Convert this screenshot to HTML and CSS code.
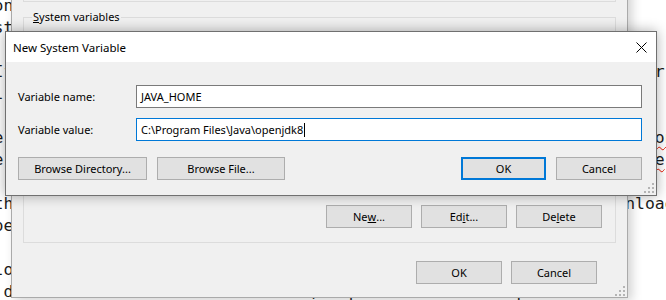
FILE: index.html
```html
<!DOCTYPE html>
<html lang="en">
<head>
<meta charset="utf-8">
<title>New System Variable</title>
<link rel="stylesheet" href="styles.css">
</head>
<body>
<pre class="editor">on your computer. Before you begin, make sure that you have
st Java installation, open a Command Prompt and type:
    java -version
If Java is not installed on your machine, download the JDK installer.
l and look for a line such as java version "1.8.0_292".
' in the output. If nothing is printed, Java is not installed yet.
e the installer is finished, open System Properties and click <span class="sp">Environment</span> Variables.
e click New... under System variables and type JAVA_HOME as the <span class="sp">name</span>.
  and set the value to the path of the JDK folder, for example
the path to the JDK folder (e.g. C:\Program Files\Java). Now download it.
pe of the installer, then restart any open command windows.

lo check the result, run echo %JAVA_HOME% in a new window.
'd like to switch versions later, repeat the same steps.</pre>

<div class="win env ui">
  <div class="user-box"></div>
  <fieldset class="group">
    <legend><u>S</u>ystem variables</legend>
    <div class="list"></div>
    <div class="row-btns">
      <div class="btn">Ne<u>w</u>...</div>
      <div class="btn">Ed<u>i</u>t...</div>
      <div class="btn">De<u>l</u>ete</div>
    </div>
  </fieldset>
  <div class="env-foot">
    <div class="btn">OK</div>
    <div class="btn">Cancel</div>
  </div>
  <svg class="grip grip-env" width="10" height="10" viewBox="0 0 10 10"><rect x="8" y="0" width="2" height="2"/><rect x="4" y="4" width="2" height="2"/><rect x="8" y="4" width="2" height="2"/><rect x="0" y="8" width="2" height="2"/><rect x="4" y="8" width="2" height="2"/><rect x="8" y="8" width="2" height="2"/></svg>
</div>

<div class="win dlg ui">
  <div class="titlebar">
    <span class="title">New System Variable</span>
    <svg class="close" width="11" height="11" viewBox="0 0 11 11"><path d="M0.5 0.5 L10.5 10.5 M10.5 0.5 L0.5 10.5" stroke="#000" stroke-width="1" fill="none"/></svg>
  </div>
  <div class="dlg-body">
    <div class="form">
      <span class="label">Variable name:</span>
      <div class="field">JAVA_HOME</div>
      <span class="label">Variable value:</span>
      <div class="field focus">C:\Program Files\Java\openjdk8<span class="caret"></span></div>
    </div>
    <div class="actions">
      <div class="btn w-dir">Browse Directory...</div>
      <div class="btn w-file">Browse File...</div>
      <span class="spacer"></span>
      <div class="btn default w-ok">OK</div>
      <div class="btn w-cancel">Cancel</div>
    </div>
  </div>
  <svg class="grip grip-dlg" width="10" height="10" viewBox="0 0 10 10"><rect x="8" y="0" width="2" height="2"/><rect x="4" y="4" width="2" height="2"/><rect x="8" y="4" width="2" height="2"/><rect x="0" y="8" width="2" height="2"/><rect x="4" y="8" width="2" height="2"/><rect x="8" y="8" width="2" height="2"/></svg>
</div>
</body>
</html>
```
FILE: styles.css
```css
* { box-sizing: border-box; }
html, body { margin: 0; padding: 0; }
body {
  width: 666px;
  height: 300px;
  overflow: hidden;
  position: relative;
  background: #fff;
}

/* background text editor */
.editor {
  margin: -5px 0 0 -6.4px;
  font-family: "DejaVu Sans Mono", monospace;
  font-size: 16.4px;
  line-height: 22px;
  color: #1b1b1b;
  white-space: pre;
}
.sp {
  text-decoration-line: underline;
  text-decoration-style: wavy;
  text-decoration-color: #e51400;
  text-decoration-thickness: 1px;
  text-underline-offset: 3px;
}

/* windows UI */
.ui {
  font-family: "Noto Sans", sans-serif;
  font-size: 11px;
  color: #000;
}
.btn {
  height: 23px;
  width: 86px;
  background: #e1e1e1;
  border: 1px solid #adadad;
  display: flex;
  align-items: center;
  justify-content: center;
  white-space: nowrap;
  flex: none;
}
.grip { position: absolute; fill: #b4b4b4; }

/* back dialog: Environment Variables */
.env {
  position: absolute;
  left: 11px;
  top: -150px;
  width: 617px;
  height: 448px;
  background: #f0f0f0;
  border: 1px solid #aaaaaa;
  box-shadow: 4px 3px 10px rgba(0, 0, 0, 0.18);
  display: flex;
  flex-direction: column;
  justify-content: flex-end;
  padding: 0 11px 13px;
}
.user-box {
  flex: none;
  height: 100px;
  border: 1px solid #dcdcdc;
  border-top: none;
  margin-bottom: 7px;
}
.group {
  flex: none;
  min-width: 0;
  margin: 0 0 18px;
  padding: 12px 13px 14px 8px;
  border: 1px solid #dcdcdc;
}
.group legend {
  padding: 0 1px;
  height: 16px;
  line-height: 16px;
}
.list {
  height: 156px;
  background: #fff;
  border: 1px solid #828790;
  margin-bottom: 12px;
}
.row-btns {
  display: flex;
  justify-content: flex-end;
  gap: 9px;
}
.env-foot {
  flex: none;
  display: flex;
  justify-content: flex-end;
  gap: 9px;
  margin-right: 19px;
}
.grip-env { right: 2px; bottom: 1px; }

/* front dialog: New System Variable */
.dlg {
  position: absolute;
  left: 5px;
  top: 31px;
  width: 652px;
  height: 165px;
  background: #f0f0f0;
  border: 1px solid #707070;
  box-shadow: 0 0 12px rgba(0, 0, 0, 0.32);
  display: flex;
  flex-direction: column;
}
.titlebar {
  flex: none;
  height: 30px;
  background: #fff;
  display: flex;
  align-items: center;
  justify-content: space-between;
  padding: 0 9px 0 7px;
  font-size: 11.5px;
}
.close { display: block; }
.dlg-body {
  flex: 1;
  padding: 23px 14px 15px 12px;
  display: flex;
  flex-direction: column;
  gap: 16px;
}
.form {
  display: grid;
  grid-template-columns: 118px 1fr;
  row-gap: 10px;
  align-items: center;
}
.field {
  height: 23px;
  background: #fff;
  border: 1px solid #7a7a7a;
  padding: 0 4px;
  display: flex;
  align-items: center;
  white-space: pre;
}
.field.focus { border-color: #0078d7; }
.caret {
  width: 1px;
  height: 14px;
  background: #000;
  margin-left: 1px;
}
.actions {
  display: flex;
  gap: 10px;
}
.actions .spacer { flex: 1; }
.w-dir { width: 129px; }
.w-file { width: 128px; }
.w-ok { width: 85px; }
.w-cancel { width: 86px; }
.btn.default { border: 2px solid #0078d7; }
.grip-dlg { right: 2px; bottom: 2px; }
```
